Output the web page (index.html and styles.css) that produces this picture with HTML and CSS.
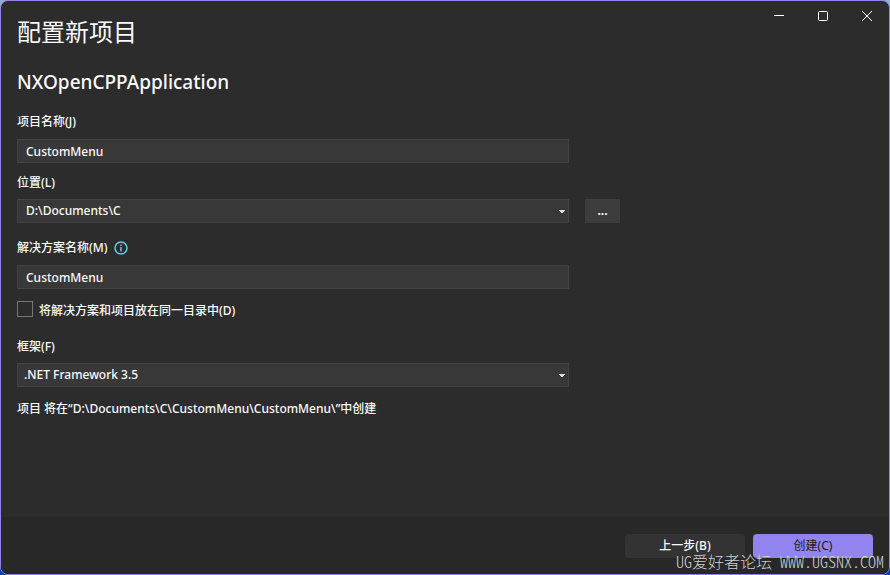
FILE: index.html
```html
<!DOCTYPE html>
<html lang="zh-CN">
<head>
    <meta charset="UTF-8">
    <meta name="viewport" content="width=device-width, initial-scale=1.0">
    <title>配置新项目</title>
    <link rel="stylesheet" href="styles.css">
</head>
<body>
    <div class="window">
        <header class="title-bar">
            <h1>配置新项目</h1>
            <div class="window-controls">
                <button type="button" aria-label="最小化">
                    <svg width="10" height="10" viewBox="0 0 10 10"><path d="M0 4.5h10"/></svg>
                </button>
                <button type="button" aria-label="最大化">
                    <svg width="10" height="10" viewBox="0 0 10 10"><rect x="0.5" y="0.5" width="9" height="9" rx="1"/></svg>
                </button>
                <button type="button" aria-label="关闭">
                    <svg width="10" height="10" viewBox="0 0 10 10"><path d="M0 0l10 10M10 0L0 10"/></svg>
                </button>
            </div>
        </header>

        <form class="project-form" id="project-form">
            <h2>NXOpenCPPApplication</h2>

            <label for="project-name">项目名称(J)</label>
            <input class="field" type="text" id="project-name" value="CustomMenu">

            <label class="location-label" for="location">位置(L)</label>
            <div class="location-row">
                <select class="field" id="location">
                    <option>D:\Documents\C</option>
                </select>
                <button class="browse" type="button" aria-label="浏览">...</button>
            </div>

            <div class="solution-label">
                <label for="solution-name">解决方案名称(M)</label>
                <svg class="info" width="14" height="14" viewBox="0 0 14 14">
                    <circle cx="7" cy="7" r="6"/>
                    <path d="M7 6v4.5M7 3.5v1.5"/>
                </svg>
            </div>
            <input class="field" type="text" id="solution-name" value="CustomMenu">

            <div class="check-row">
                <input type="checkbox" id="same-folder">
                <label for="same-folder">将解决方案和项目放在同一目录中(D)</label>
            </div>

            <label for="framework">框架(F)</label>
            <select class="field framework" id="framework">
                <option>.NET Framework 3.5</option>
            </select>

            <p class="result">项目 将在“D:\Documents\C\CustomMenu\CustomMenu\”中创建</p>
        </form>

        <footer class="actions">
            <button class="action" type="button">上一步(B)</button>
            <button class="action primary" type="submit" form="project-form">创建(C)</button>
        </footer>
    </div>
    <div class="watermark">UG爱好者论坛 WWW.UGSNX.COM</div>
</body>
</html>
```
FILE: styles.css
```css
* {
    box-sizing: border-box;
}

body {
    margin: 0;
    background: linear-gradient(#8fb0cc, #0a3fb5);
    color: #fafafa;
    font-family: "Noto Sans", "Noto Sans CJK SC", sans-serif;
    font-size: 12px;
    font-weight: 500;
    line-height: 20px;
}

button,
input,
select {
    margin: 0;
    color: inherit;
    font: inherit;
}

.window {
    display: flex;
    flex-direction: column;
    min-height: 100vh;
    border: 1px solid #9184ee;
    border-radius: 8px;
    background-color: #2c2c2c;
    overflow: hidden;
}

.title-bar {
    display: flex;
    justify-content: space-between;
    align-items: flex-start;
    padding-left: 16px;
}

h1 {
    margin: 15px 0 0;
    font-size: 24px;
    font-weight: normal;
    line-height: 32px;
}

.window-controls {
    display: flex;
}

.window-controls button {
    display: flex;
    align-items: center;
    justify-content: center;
    width: 44px;
    height: 30px;
    padding: 0;
    border: none;
    background: none;
}

.window-controls svg {
    fill: none;
    stroke: #ffffff;
}

.project-form {
    display: flex;
    flex: 1;
    flex-direction: column;
    align-items: flex-start;
    padding: 0 16px;
}

h2 {
    margin: 20px 0 16px;
    font-size: 19px;
    font-weight: 500;
    line-height: 28px;
}

.field {
    width: 100%;
    max-width: 552px;
    height: 24px;
    margin-top: 7px;
    padding: 0 8px;
    border: 1px solid #424242;
    border-radius: 0;
    background-color: #383838;
    line-height: 20px;
}

select.field {
    appearance: none;
    background-image: linear-gradient(to bottom right, #dedede 60%, transparent 60%), linear-gradient(to bottom left, #dedede 60%, transparent 60%);
    background-position: right 3px center, right 6px center;
    background-repeat: no-repeat;
    background-size: 3px 3px;
}

.location-label {
    margin-top: 10px;
}

.location-row {
    display: flex;
    align-self: stretch;
    gap: 16px;
    margin-top: 6px;
}

.location-row .field {
    margin-top: 0;
}

.browse {
    flex: none;
    width: 35px;
    height: 24px;
    padding: 0;
    border: none;
    background-color: #3d3d3d;
    font-weight: bold;
}

.solution-label {
    display: flex;
    align-items: center;
    gap: 6px;
    margin-top: 15px;
}

.info {
    fill: none;
    stroke: #6cc7ea;
    stroke-width: 1.5;
}

.check-row {
    display: flex;
    align-items: flex-start;
    gap: 6px;
    margin: 12px 0 16px;
}

.check-row input {
    appearance: none;
    width: 16px;
    height: 16px;
    border: 1px solid #757575;
    background-color: #2c2c2c;
}

.framework {
    margin-top: 6px;
    padding: 0 6px;
}

.result {
    margin: 12px 0 0;
}

.actions {
    display: flex;
    justify-content: flex-end;
    gap: 8px;
    padding: 17px 16px 16px;
    background-color: #282828;
}

.action {
    width: 120px;
    height: 24px;
    padding: 0;
    border: none;
    border-radius: 4px;
    background-color: #333333;
}

.action.primary {
    background-color: #9184ee;
    color: #1a1a1a;
    font-weight: normal;
}

/* forum mark laid over the bottom right corner */
.watermark {
    position: absolute;
    right: 6px;
    bottom: 6px;
    color: #cfcfcf;
    font-family: "Noto Sans CJK SC", monospace;
    font-size: 16px;
    font-weight: 300;
    line-height: 16px;
    font-feature-settings: "hwid";
    pointer-events: none;
}
```
